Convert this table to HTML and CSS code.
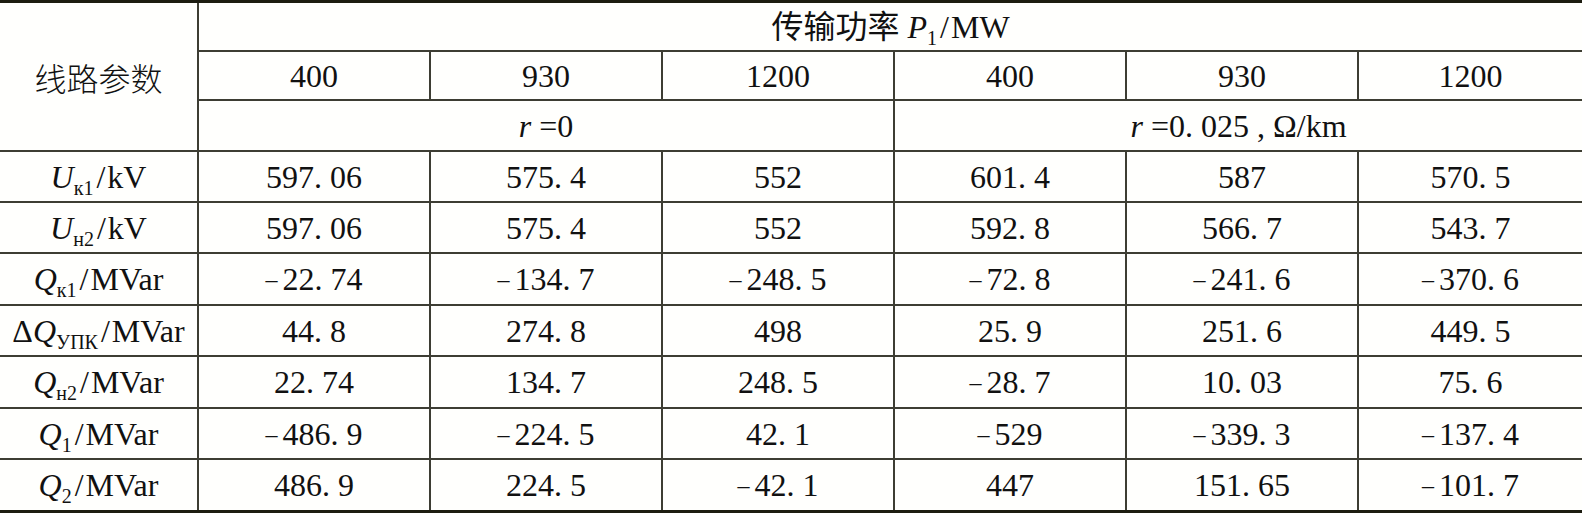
FILE: index.html
```html
<!DOCTYPE html>
<html lang="zh">
<head>
<meta charset="utf-8">
<link rel="stylesheet" href="styles.css">
</head>
<body>
<table class="t">
  <colgroup><col class="c0"><col class="cd"><col class="cd"><col class="cd"><col class="cd"><col class="cd"><col class="cl"></colgroup>
  <tr class="h49">
    <td rowspan="3" class="lab zh">线路参数</td>
    <td colspan="6" class="last">传输功率 <i>P</i><span class="sub">1</span><span class="sl">/</span>MW</td>
  </tr>
  <tr class="h49"><td>400</td><td>930</td><td>1200</td><td>400</td><td>930</td><td class="last">1200</td></tr>
  <tr class="h51"><td colspan="3"><i>r</i> =0</td><td colspan="3" class="last"><i>r</i> =0. 025 , Ω/km</td></tr>
  <tr class="h51"><td class="lab"><i>U</i><span class="sub">к1</span><span class="sl">/</span>kV</td><td>597. 06</td><td>575. 4</td><td>552</td><td>601. 4</td><td>587</td><td class="last">570. 5</td></tr>
  <tr class="h51"><td class="lab"><i>U</i><span class="sub">н2</span><span class="sl">/</span>kV</td><td>597. 06</td><td>575. 4</td><td>552</td><td>592. 8</td><td>566. 7</td><td class="last">543. 7</td></tr>
  <tr class="h52"><td class="lab"><i>Q</i><span class="sub">к1</span><span class="sl">/</span>MVar</td><td><span class="neg">–</span>22. 74</td><td><span class="neg">–</span>134. 7</td><td><span class="neg">–</span>248. 5</td><td><span class="neg">–</span>72. 8</td><td><span class="neg">–</span>241. 6</td><td class="last"><span class="neg">–</span>370. 6</td></tr>
  <tr class="h51"><td class="lab">Δ<i>Q</i><span class="sub">УПК</span><span class="sl">/</span>MVar</td><td>44. 8</td><td>274. 8</td><td>498</td><td>25. 9</td><td>251. 6</td><td class="last">449. 5</td></tr>
  <tr class="h52"><td class="lab"><i>Q</i><span class="sub">н2</span><span class="sl">/</span>MVar</td><td>22. 74</td><td>134. 7</td><td>248. 5</td><td><span class="neg">–</span>28. 7</td><td>10. 03</td><td class="last">75. 6</td></tr>
  <tr class="h51"><td class="lab"><i>Q</i><span class="sub">1</span><span class="sl">/</span>MVar</td><td><span class="neg">–</span>486. 9</td><td><span class="neg">–</span>224. 5</td><td>42. 1</td><td><span class="neg">–</span>529</td><td><span class="neg">–</span>339. 3</td><td class="last"><span class="neg">–</span>137. 4</td></tr>
  <tr class="h50 final"><td class="lab"><i>Q</i><span class="sub">2</span><span class="sl">/</span>MVar</td><td>486. 9</td><td>224. 5</td><td><span class="neg">–</span>42. 1</td><td>447</td><td>151. 65</td><td class="last"><span class="neg">–</span>101. 7</td></tr>
</table>
</body>
</html>
```
FILE: styles.css
```css
html, body {
  margin: 0;
  padding: 0;
  background: #fffffd;
}
.t {
  width: 1582px;
  table-layout: fixed;
  border-collapse: separate;
  border-spacing: 0;
  border-top: 3px solid #1c1c10;
  border-bottom: 3px solid #1c1c10;
  font-family: "Liberation Serif", "Noto Sans CJK SC", serif;
  font-size: 32px;
  color: #111;
}
.c0 { width: 199px; }
.cd { width: 232px; }
.cl { width: 223px; }
.t td {
  box-sizing: border-box;
  border-right: 2px solid #3d3d33;
  border-bottom: 2px solid #3d3d33;
  padding: 0;
  text-align: center;
  vertical-align: middle;
  line-height: 32px;
  white-space: nowrap;
}
.t td.last { border-right: none; }
.t tr.final td { border-bottom: none; }
.t td.lab { border-right: 2px solid #3d3d33; }
.h49 td { height: 49px; }
.h50 td { height: 50px; }
.h51 td { height: 51px; }
.h52 td { height: 52px; }
.t tr.h49 td.zh { height: auto; }
.zh {
  font-family: "Noto Sans CJK SC", sans-serif;
  font-weight: 300;
}
.sub {
  font-size: 20px;
  vertical-align: -7px;
  line-height: 0;
}
.sl {
  margin: 0 2px 0 3px;
}
.neg {
  font-size: 24px;
  vertical-align: 3px;
  margin-right: 5px;
}
```
